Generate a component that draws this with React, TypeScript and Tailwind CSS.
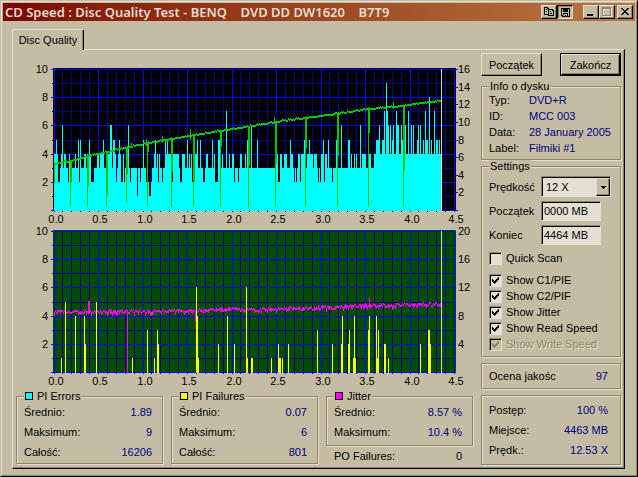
import * as React from "react";

const PLOT_TOP = 7;
const PLOT_LEFT = 37;
const UNIT = 14.1;

const valueToY = (value: number) => Math.round(PLOT_TOP + 141 - value * UNIT);
const gigsToX = (gigs: number) => Math.round(PLOT_LEFT + 0.5 + gigs * 89);

// small repeatable noise source, so the graphs look the same on every render
function createNoise(seed: number) {
  let state = seed;
  return () => {
    state = (state * 1103515245 + 12345) % 2147483648;
    return state / 2147483648;
  };
}

// [column, level]
const pieSpikes: [number, number][] = [
  [0, 4], [2, 5], [7, 4], [8, 6], [11, 4], [24, 5], [26, 5], [35, 5], [49, 5],
  [56, 6], [57, 6], [59, 5], [60, 5], [65, 5], [74, 6], [83, 1], [89, 5],
  [95, 1], [96, 1], [101, 5], [111, 5], [113, 5], [133, 5], [143, 5], [146, 5],
  [158, 5], [164, 5], [165, 5], [172, 7], [193, 5], [197, 6], [203, 5],
  [236, 5], [250, 5], [255, 5], [269, 5], [274, 5], [282, 5], [287, 6],
  [294, 5], [295, 5], [306, 6], [322, 5], [323, 5], [324, 5], [325, 6],
  [328, 5], [329, 5], [330, 7], [332, 9], [333, 7], [334, 6], [336, 6],
  [339, 6], [342, 7], [343, 6], [344, 6], [347, 6], [349, 5], [351, 6],
  [354, 7], [357, 6], [359, 6], [364, 6], [366, 6], [369, 5], [371, 7],
  [373, 5], [375, 8], [377, 5], [380, 7], [382, 5], [383, 5],
];

// stretches where the error level drops to two
const pieLows = [
  4, 5, 14, 25, 37, 38, 39, 62, 67, 68, 70, 76, 86, 92, 93, 94, 97, 104, 108,
  118, 126, 127, 133, 138, 139, 149, 150, 161, 162, 163, 180, 184, 224, 225,
  240, 242, 246, 264, 266, 270, 274, 278,
];

const pifBars: [number, number][] = [
  [61, 1], [65, 5], [75, 4], [84, 4], [85, 2], [96, 5], [132, 1], [147, 3],
  [154, 1], [157, 3], [158, 2], [196, 6], [197, 4], [198, 1], [218, 2],
  [227, 4], [234, 2], [246, 6], [247, 1], [251, 1], [252, 1], [271, 1],
  [278, 2], [279, 1], [280, 1], [282, 1], [288, 2], [317, 3], [332, 2],
  [341, 2], [342, 4], [348, 2], [349, 3], [353, 1], [354, 4], [355, 1],
  [368, 3], [369, 4], [376, 4], [377, 1], [378, 3], [384, 2], [385, 2],
  [388, 1], [420, 2], [428, 3], [429, 3], [430, 2],
];

function getPieLevels() {
  const noise = createNoise(77);
  const levels: number[] = [];
  let n = noise();
  for (let i = 0; i < 388; i++) {
    // most levels last for a column or two
    if (noise() > 0.35) n = noise();
    if (i < 320) {
      levels.push(n > 0.62 ? 4 : 3);
    } else {
      levels.push(n > 0.55 ? 5 : 4);
    }
  }
  pieLows.forEach((i) => (levels[i] = 2));
  pieSpikes.forEach(([i, level]) => (levels[i] = level));
  return levels;
}

// x, y of the smoothed read speed curve
const speedCurve: [number, number][] = [
  [38, 101], [55, 98], [73, 93], [91, 89], [110, 85], [133, 80], [155, 76],
  [179, 72], [204, 68], [230, 64], [260, 59], [290, 55], [320, 51], [354, 46],
  [387, 43], [405, 40], [425, 38],
];

// x, depth of the wide part, depth of the thin part
const speedDips: [number, number, number][] = [
  [55, 121, 144], [72, 124, 144], [91, 133, 144], [111, 112, 140],
  [132, 90, 144], [156, 110, 145], [178, 120, 144], [205, 85, 144],
  [233, 104, 145], [260, 102, 144], [290, 86, 144], [322, 94, 144],
  [353, 71, 144], [388, 109, 144],
];

function curveAt(points: [number, number][], x: number) {
  for (let i = 1; i < points.length; i++) {
    const [x0, y0] = points[i - 1];
    const [x1, y1] = points[i];
    if (x <= x1) return y0 + ((y1 - y0) * (x - x0)) / (x1 - x0);
  }
  return points[points.length - 1][1];
}

function getSpeedPath() {
  const noise = createNoise(9);
  let path = "";
  for (let x = 38; x < 425; x++) {
    const y = Math.round(curveAt(speedCurve, x));
    const up = noise() > 0.85 ? 1 : 0;
    path += `M${x} ${y - up}h1v2h-1z`;
  }
  [[115, 3], [130, 4], [174, 6], [146, 4], [258, 4], [377, 4]].forEach(([x, h]) => {
    const y = Math.round(curveAt(speedCurve, x));
    path += `M${x} ${y - h}h1v${h * 2 - 1}h-1z`;
  });
  speedDips.forEach(([x, wide, thin]) => {
    const y = Math.round(curveAt(speedCurve, x));
    path += `M${x - 1} ${y}h2V${wide}h-2zM${x - 1} ${y}h1V${thin}h-1z`;
  });
  return path + "M38 101h1V121h-1z";
}

const jitterCurve: [number, number][] = [
  [38, 88], [180, 87], [215, 85], [240, 86], [260, 85], [300, 84], [340, 82],
  [380, 81], [425, 80],
];

function getJitterPath() {
  const noise = createNoise(31);
  let path = "";
  for (let x = 38; x < 425; x++) {
    const y = Math.round(curveAt(jitterCurve, x) + (noise() - 0.5) * 3);
    const height = noise() > 0.7 ? 4 : 2;
    path += `M${x} ${y - 1}h1v${height}h-1z`;
  }
  return path + "M72 77h2v11h-2zM111 88h1v60h-1zM179 88h1v10h-1zM353 74h1v8h-1z";
}

interface IChartProps {
  label: string;
  background: string;
  rightLabels: { text: string; value: number }[];
  rightTicks?: boolean;
  children: React.ReactNode;
}

function Chart({ label, background, rightLabels, rightTicks, children }: IChartProps) {
  const columns = Array.from({ length: 46 }, (_, i) => i);
  const rows = Array.from({ length: 11 }, (_, i) => i);
  const minorColumns = columns.filter((i) => i % 5 !== 0);
  const majorColumns = columns.filter((i) => i % 5 === 0);
  return (
    <svg
      viewBox="0 0 457 162"
      className="block h-auto w-full text-[11px]"
      role="img"
      aria-label={label}
    >
      <g shapeRendering="crispEdges">
        <rect x="37" y="6" width="403" height="143" fill={background} />
        {minorColumns.map((i) => (
          <rect key={i} x={gigsToX(i / 10)} y="7" width="1" height="143" fill="#000080" />
        ))}
        {rows.filter((i) => i % 2).map((i) => (
          <rect key={i} x="36" y={valueToY(i)} width="402" height="1" fill="#000080" />
        ))}
        {majorColumns.map((i) => (
          <rect key={i} x={gigsToX(i / 10)} y="7" width="1" height="143" fill="#0000ff" />
        ))}
        {rows.filter((i) => i % 2 === 0).map((i) => (
          <rect key={i} x="35" y={valueToY(i)} width="403" height="1" fill="#0000ff" />
        ))}
        {rightTicks &&
          Array.from({ length: 17 }, (_, i) => (
            <rect
              key={i}
              x="438"
              y={valueToY(i / 1.6)}
              width={i % 2 ? 2 : 4}
              height="1"
              fill={i % 2 ? "#000080" : "#0000ff"}
            />
          ))}
        {children}
        <rect x="425" y="7" width="1" height="142" fill="#d4d4d4" />
      </g>
      {[2, 4, 6, 8, 10].map((value) => (
        <text key={value} x="32" y={valueToY(value) + 4} textAnchor="end">
          {value}
        </text>
      ))}
      {rightLabels.map(({ text, value }) => (
        <text key={text} x="442" y={valueToY(value) + 4}>
          {text}
        </text>
      ))}
      {majorColumns.map((i) => (
        <text key={i} x={gigsToX(i / 10) + 2} y="161" textAnchor="middle">
          {(i / 10).toFixed(1)}
        </text>
      ))}
    </svg>
  );
}

interface IGroupProps {
  title?: React.ReactNode;
  className?: string;
  children: React.ReactNode;
}

function Group({ title, className = "", children }: IGroupProps) {
  return (
    <fieldset
      className={`min-w-0 border border-[#8c8663] shadow-[1px_1px_0_#e3dfd3,inset_1px_1px_0_#e3dfd3] ${className}`}
    >
      {title && (
        <legend className="flex h-3 items-center gap-1 bg-[#c4bda4] px-px leading-3">
          {title}
        </legend>
      )}
      {children}
    </fieldset>
  );
}

function Row({ name, value, dark }: { name: string; value: string; dark?: boolean }) {
  return (
    <div className="flex h-5 items-center justify-between pr-px">
      <dt>{name}</dt>
      <dd className={dark ? "text-black" : "text-[#000080]"}>{value}</dd>
    </div>
  );
}

function Swatch({ color }: { color: string }) {
  return <span className={`h-2 w-2 border border-black ${color}`} />;
}

interface ICheckProps {
  label: string;
  checked?: boolean;
  disabled?: boolean;
}

function Check({ label, checked, disabled }: ICheckProps) {
  return (
    <label
      className={`flex h-4 items-center gap-1 ${
        disabled ? "text-[#8c8663] [text-shadow:1px_1px_0_#e3dfd3]" : ""
      }`}
    >
      <span className="relative h-[13px] w-[13px]">
        <input
          type="checkbox"
          defaultChecked={checked}
          disabled={disabled}
          className="peer block h-[13px] w-[13px] appearance-none border border-t-[#8c8663] border-r-[#e3dfd3] border-b-[#e3dfd3] border-l-[#8c8663] bg-[#e3dfd3] shadow-[inset_1px_1px_0_#000] disabled:bg-[#c4bda4]"
        />
        <svg
          viewBox="0 0 13 13"
          className="pointer-events-none absolute inset-0 hidden peer-checked:block"
          shapeRendering="crispEdges"
          fill="currentColor"
        >
          <path d="M3 5h1v1h1v1h1v-1h1v-1h1v-1h1v-1h1v3h-1v1h-1v1h-1v1h-1v1h-1v-1h-1v-1h-1z" />
        </svg>
      </span>
      {label}
    </label>
  );
}

const raised =
  "border border-t-[#e3dfd3] border-l-[#e3dfd3] border-r-black border-b-black bg-[#c4bda4] shadow-[inset_-1px_-1px_0_#8c8663]";
const sunken =
  "border border-t-[#8c8663] border-l-[#8c8663] border-r-[#e3dfd3] border-b-[#e3dfd3] bg-[#e3dfd3] shadow-[inset_1px_1px_0_#000]";

function TitleButton({ label, pressed, children }: { label: string; pressed?: boolean; children: React.ReactNode }) {
  return (
    <button
      aria-label={label}
      className={`h-[14px] w-4 ${
        pressed
          ? "border border-t-black border-l-black border-r-[#e3dfd3] border-b-[#e3dfd3] bg-[#c4bda4] shadow-[inset_1px_1px_0_#8c8663]"
          : raised
      }`}
    >
      <svg viewBox="0 0 14 12" className="block h-3 w-[14px]" shapeRendering="crispEdges">
        {children}
      </svg>
    </button>
  );
}

function TitleBar() {
  return (
    <header className="flex h-[18px] items-center bg-linear-to-r from-[#800000] to-[#b87840] pr-0.5 pl-0.5">
      <h1 className="min-w-0 flex-1 overflow-hidden font-['Noto_Sans',sans-serif] text-[13px] leading-[18px] font-semibold whitespace-pre text-[#e3dfd3]">
        CD Speed : Disc Quality Test - BENQ{"    "}DVD DD DW1620{"    "}B7T9
      </h1>
      <div className="flex">
        <TitleButton label="Copy">
          <path
            d="M2 1h4v1h1v1h4v1h1v6H6V9H2zM3 2v6h3V3H5V2zM7 4v5h4V5h-1V4z"
            fill="#000"
            fillRule="evenodd"
          />
          <path d="M4 3h1v1H4zM4 5h1v1H4zM8 5h1v1H8zM8 7h2v1H8z" fill="#000" />
        </TitleButton>
        <TitleButton label="Save" pressed>
          <path
            d="M3 2h9v9H4v-1H3zM4 3v6h1v1h6V3h-1v3H5V3z"
            fill="#000"
            fillRule="evenodd"
          />
          <path d="M6 3h1v2H6zM8 3h1v2H8zM5 7h5v1H5zM5 8h1v1H5zM7 9h1v1H7zM9 8h1v2H9z" fill="#000" />
        </TitleButton>
      </div>
      <div className="ml-[10px] flex">
        <TitleButton label="Minimize">
          <path d="M3 8h6v2H3z" fill="#000" />
        </TitleButton>
        <TitleButton label="Maximize">
          <path d="M3 2h9v9H3zM4 4v6h7V4z" fill="#e3dfd3" fillRule="evenodd" />
          <path d="M2 1h9v9H2zM3 3v6h7V3z" fill="#8c8663" fillRule="evenodd" />
        </TitleButton>
      </div>
      <div className="ml-0.5 flex">
        <TitleButton label="Close">
          <path
            d="M3 2h2v1h1v1h2V3h1V2h2v1h-1v1H9v1H8v1h1v1h1v1h1v1H9V8H8V7H6v1H5v1H3V8h1V7h1V6h1V5H5V4H4V3H3z"
            fill="#000"
          />
        </TitleButton>
      </div>
    </header>
  );
}

const discInfo = [
  ["Typ:", "DVD+R"],
  ["ID:", "MCC 003"],
  ["Data:", "28 January 2005"],
  ["Label:", "Filmiki #1"],
];

function Sidebar() {
  return (
    <aside className="w-[140px] shrink-0 pt-[3px]">
      <div className="flex justify-between">
        <button className={`h-[23px] w-[61px] ${raised}`}>Początek</button>
        <button className="h-[23px] w-[61px] border border-black">
          <span className={`flex h-full items-center justify-center ${raised}`}>Zakończ</span>
        </button>
      </div>

      <Group title="Info o dysku" className="mt-1 px-[7px] pb-[3px]">
        <dl>
          {discInfo.map(([name, value]) => (
            <div key={name} className="flex h-4 items-center whitespace-nowrap">
              <dt className="w-10 shrink-0">{name}</dt>
              <dd className="text-[#000080]">{value}</dd>
            </div>
          ))}
        </dl>
      </Group>

      <Group title="Settings" className="px-[7px] pb-1">
        <div className="flex flex-col gap-1 pt-1">
          <div className="flex items-center">
            <label htmlFor="speed" className="w-[52px]">
              Prędkość
            </label>
            <div className="relative">
              <select id="speed" className={`block h-[21px] w-[70px] appearance-none pl-1 ${sunken}`}>
                <option>12 X</option>
              </select>
              <span
                className={`pointer-events-none absolute top-0.5 right-px bottom-px flex w-[14px] items-center justify-center ${raised}`}
              >
                <svg viewBox="0 0 5 3" className="h-[3px] w-[5px]" shapeRendering="crispEdges">
                  <path d="M0 0h5v1H4v1H3v1H2V2H1V1H0z" />
                </svg>
              </span>
            </div>
          </div>
          <div className="flex items-center">
            <label htmlFor="start" className="w-[52px]">
              Początek
            </label>
            <input id="start" defaultValue="0000 MB" className={`h-5 w-[60px] px-0.5 ${sunken}`} />
          </div>
          <div className="flex items-center">
            <label htmlFor="end" className="w-[52px]">
              Koniec
            </label>
            <input id="end" defaultValue="4464 MB" className={`h-5 w-[60px] px-0.5 ${sunken}`} />
          </div>
        </div>
        <div className="mt-[5px]">
          <Check label="Quick Scan" />
        </div>
        <div className="mt-1.5">
          <Check label="Show C1/PIE" checked />
          <Check label="Show C2/PIF" checked />
          <Check label="Show Jitter" checked />
          <Check label="Show Read Speed" checked />
          <Check label="Show Write Speed" checked disabled />
        </div>
      </Group>

      <Group className="mt-1.5 py-0.5 pr-[11px] pl-[7px]">
        <dl>
          <Row name="Ocena jakośc" value="97" />
        </dl>
      </Group>

      <Group className="mt-1.5 py-1 pr-[11px] pl-[7px]">
        <dl>
          <Row name="Postęp:" value="100 %" />
          <Row name="Miejsce:" value="4463 MB" />
          <Row name="Prędk.:" value="12.53 X" />
        </dl>
      </Group>
    </aside>
  );
}

function Stats() {
  return (
    <div className="mt-1 grid grid-cols-3 items-start gap-2">
      <Group title={<><Swatch color="bg-[#00ffff]" />PI Errors</>} className="pr-[9px] pb-px pl-[7px]">
        <dl>
          <Row name="Średnio:" value="1.89" />
          <Row name="Maksimum:" value="9" />
          <Row name="Całość:" value="16206" />
        </dl>
      </Group>
      <Group title={<><Swatch color="bg-[#ffff00]" />PI Failures</>} className="pr-[9px] pb-px pl-[7px]">
        <dl>
          <Row name="Średnio:" value="0.07" />
          <Row name="Maksimum:" value="6" />
          <Row name="Całość:" value="801" />
        </dl>
      </Group>
      <div>
        <Group title={<><Swatch color="bg-[#ff00ff]" />Jitter</>} className="pr-[9px] pb-[3px] pl-[7px]">
          <dl>
            <Row name="Średnio:" value="8.57 %" />
            <Row name="Maksimum:" value="10.4 %" />
          </dl>
        </Group>
        <dl className="pr-[10px] pl-2">
          <Row name="PO Failures:" value="0" dark />
        </dl>
      </div>
    </div>
  );
}

export default function App() {
  return (
    <div className="flex min-h-screen flex-col border border-t-[#c4bda4] border-r-black border-b-black border-l-[#c4bda4] bg-[#c4bda4] font-['Liberation_Sans',sans-serif] text-[11px] leading-[14px] text-black">
      <div className="flex flex-1 flex-col border border-t-[#e3dfd3] border-r-[#8c8663] border-b-[#8c8663] border-l-[#e3dfd3] p-px">
        <TitleBar />
        <main className="mt-2 mr-[10px] mb-[5px] ml-[9px] flex flex-1 flex-col">
          <div role="tablist" className="relative -mb-px flex">
            <button
              role="tab"
              aria-selected="true"
              className="h-[21px] w-[72px] rounded-t-xs border-t border-r border-l border-t-[#e3dfd3] border-r-black border-l-[#e3dfd3] bg-[#c4bda4] shadow-[inset_-1px_0_0_#8c8663]"
            >
              Disc Quality
            </button>
          </div>
          <div className="flex flex-1 gap-2 border border-t-[#e3dfd3] border-r-black border-b-black border-l-[#e3dfd3] pr-[3px] pl-[3px] shadow-[inset_-1px_-1px_0_#8c8663]">
            <div className="min-w-0 flex-1 pt-3">
              <Chart
                label="PI Errors and read speed"
                background="#000000"
                rightTicks
                rightLabels={[16, 14, 12, 10, 8, 6, 4, 2].map((v) => ({
                  text: `${v}`,
                  value: v / 1.6,
                }))}
              >
                {getPieLevels().map((level, i) => (
                  <rect
                    key={i}
                    x={38 + i}
                    y={valueToY(level)}
                    width="1"
                    height={149 - valueToY(level)}
                    fill="#00ffff"
                  />
                ))}
                <path d={getSpeedPath()} fill="#00c800" />
              </Chart>
              <Chart
                label="PI Failures and jitter"
                background="#004c00"
                rightLabels={[20, 16, 12, 8, 4].map((v) => ({ text: `${v}`, value: v / 2 }))}
              >
                <path d={getJitterPath()} fill="#ff00ff" />
                {pifBars.map(([x, level]) => (
                  <rect
                    key={x}
                    x={x - 16}
                    y={valueToY(level)}
                    width="1"
                    height={149 - valueToY(level)}
                    fill="#ffff00"
                  />
                ))}
              </Chart>
              <Stats />
            </div>
            <Sidebar />
          </div>
        </main>
      </div>
    </div>
  );
}
